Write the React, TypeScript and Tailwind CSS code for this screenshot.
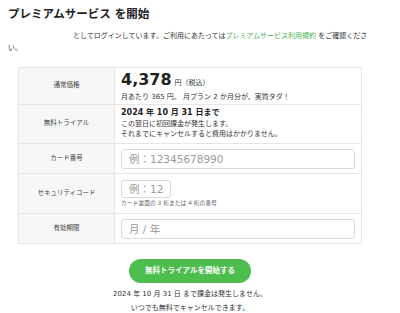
const FONT = { fontFamily: '"DejaVu Sans", "Noto Sans CJK JP", sans-serif' };

function Label({ children }: { children: string }) {
  return (
    <div className="flex items-center justify-center border-r border-[#e6e6e6] bg-[#f7f7f7] text-[6.5px] text-[#444]">
      {children}
    </div>
  );
}

export default function App() {
  return (
    <div className="h-[313px] w-[400px] overflow-hidden bg-white px-2 pt-[6px] text-[#333]" style={FONT}>
      <h1 className="text-[11.5px] font-bold leading-[16px] text-[#222]">プレミアムサービス を開始</h1>

      <p className="mt-[8px] text-[7px] leading-[12px]">
        <span className="inline-block w-[65px]" />
        としてログインしています。ご利用にあたっては
        <a className="text-[#4caf50]">プレミアムサービス利用規約</a> をご確認くださ
        <br />
        い。
      </p>

      <div className="ml-[10px] mt-[13px] w-[344px] divide-y divide-[#e6e6e6] border border-[#e6e6e6]">
        <div className="grid h-[37px] grid-cols-[96px_1fr]">
          <Label>通常価格</Label>
          <div className="flex flex-col justify-center pl-[6px]">
            <div className="leading-[18px]">
              <span className="text-[16px] font-bold text-[#222]">4,378</span>
              <span className="ml-[3px] text-[7px]">円（税込）</span>
            </div>
            <div className="text-[7px] leading-[10px]">月あたり 365 円。 月プラン 2 か月分が、実質タダ！</div>
          </div>
        </div>

        <div className="grid h-[39px] grid-cols-[96px_1fr]">
          <Label>無料トライアル</Label>
          <div className="flex flex-col justify-center pl-[6px] text-[7px] leading-[10.5px]">
            <div className="text-[8px] font-bold text-[#222]">2024 年 10 月 31 日まで</div>
            <div>この翌日に初回課金が発生します。</div>
            <div>それまでにキャンセルすると費用はかかりません。</div>
          </div>
        </div>

        <div className="grid h-[30px] grid-cols-[96px_1fr]">
          <Label>カード番号</Label>
          <div className="flex items-center pl-[6px] pr-[6px]">
            <input
              className="h-[20px] w-full rounded-[3px] border border-[#d9d9d9] px-[7px] text-[10.5px] placeholder:text-[#999]"
              placeholder="例：12345678990"
            />
          </div>
        </div>

        <div className="grid h-[40px] grid-cols-[96px_1fr]">
          <Label>セキュリティコード</Label>
          <div className="flex flex-col justify-center pl-[6px]">
            <input
              className="h-[18px] w-[50px] rounded-[3px] border border-[#d9d9d9] px-[7px] text-[10.5px] placeholder:text-[#999]"
              placeholder="例：123"
            />
            <div className="mt-[1px] text-[5.8px] leading-[8px] text-[#666]">カード裏面の 3 桁または 4 桁の番号</div>
          </div>
        </div>

        <div className="grid h-[29px] grid-cols-[96px_1fr]">
          <Label>有効期限</Label>
          <div className="flex items-center pl-[6px] pr-[6px]">
            <input
              className="h-[20px] w-full rounded-[3px] border border-[#d9d9d9] px-[7px] text-[10.5px] placeholder:text-[#999]"
              placeholder="月 / 年"
            />
          </div>
        </div>
      </div>

      <div className="flex flex-col items-center pr-[20px]">
        <button className="mt-[15px] h-[24px] w-[122px] rounded-full bg-[#4dbd4d] text-[7.5px] font-bold text-white">
          無料トライアルを開始する
        </button>
        <p className="mt-[4px] text-center text-[7px] leading-[14px]">
          2024 年 10 月 31 日 まで課金は発生しません。
          <br />
          いつでも無料でキャンセルできます。
        </p>
      </div>
    </div>
  );
}
